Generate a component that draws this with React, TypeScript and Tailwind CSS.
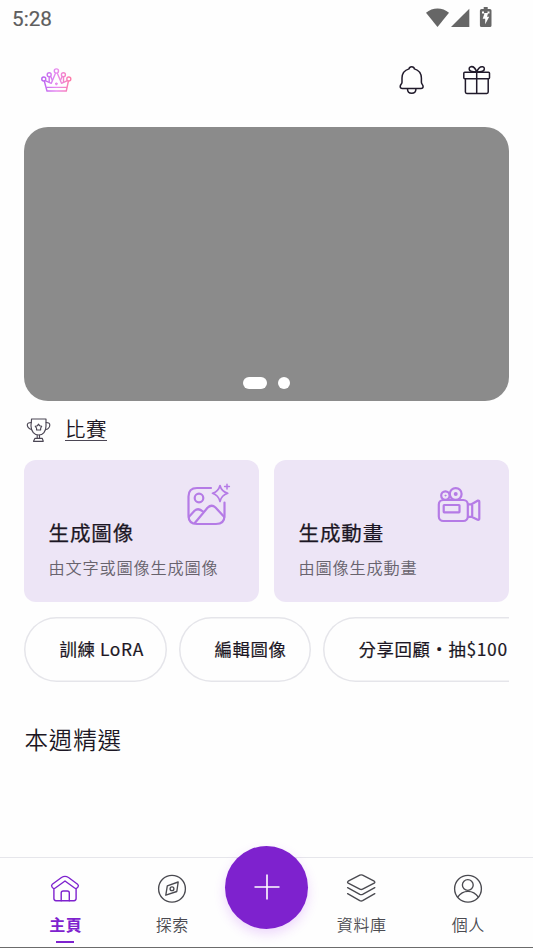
import type { ReactNode } from 'react';
import clsx from 'clsx';

interface IconProps {
  className?: string;
}

interface FeatureCardProps {
  title: string;
  description: string;
  icon: ReactNode;
}

interface TabProps {
  label: string;
  icon: ReactNode;
  active?: boolean;
}

const shortcuts = [
  { label: '訓練 LoRA', width: 'w-[143px]' },
  { label: '編輯圖像', width: 'w-[132px]' },
  { label: '分享回顧・抽$100', width: 'w-[220px]' }
];

function StatusIcons() {
  return (
    <svg viewBox="424 4 72 28" className="h-7 w-[72px]" fill="#666666">
      <path d="M426 12.8C432.5 6.9 442.5 6.9 449 12.8L437.5 26.9Z" />
      <path d="M469.3 8.8V27H451Z" />
      <path
        fillRule="evenodd"
        d="M483.7 7h4v2h2.2q1.6 0 1.6 1.6v14.9q0 1.6-1.6 1.6h-8.400q-1.600 0-1.600-1.600V10.600q0-1.600 1.600-1.600h2.200zM482 11.500V13.500H484.500L482.700 18.800H485.200V24.200L489.200 16.800H487L488 13.500H489.500V11.500H487.500V13H484V11.500z"
      />
    </svg>
  );
}

function CrownIcon({ className }: IconProps) {
  return (
    <svg viewBox="40 66 32 28" className={className} fill="none" stroke="url(#crown)" strokeWidth="1.4" strokeLinejoin="round">
      <defs>
        <linearGradient id="crown" gradientUnits="userSpaceOnUse" x1="41" y1="80" x2="72" y2="80">
          <stop offset="0" stopColor="#b45cf0" />
          <stop offset="0.5" stopColor="#e88cf0" />
          <stop offset="1" stopColor="#ff7aa2" />
        </linearGradient>
      </defs>
      <circle cx="43.800" cy="79" r="2" />
      <circle cx="49.200" cy="74.700" r="2" />
      <circle cx="56.400" cy="71" r="2.100" />
      <circle cx="63.400" cy="74.700" r="2" />
      <circle cx="68.800" cy="79" r="2" />
      <path d="M44.300 81L47 91h19.300L68.400 81M46.800 87.400h19.600" />
      <path d="M45.200 80.600L51.300 83.300L55.600 73M57.200 73L61.500 83.300L67.400 80.600" />
      <path d="M49.200 76.700V82.200M50.600 76.200L52.400 80.400M63.500 76.700V82.200M62.200 76.200L60.400 80.400" />
      <path d="M56.400 82.400v2.800M55 83.800h2.800" />
    </svg>
  );
}

function BellIcon({ className }: IconProps) {
  return (
    <svg viewBox="398 64 28 32" className={className} fill="none" stroke="#201a2b" strokeWidth="1.5" strokeLinecap="round" strokeLinejoin="round">
      <path d="M409 68.900C409.500 65.900 413.900 65.900 414.400 68.900C418.900 70.200 421.300 73.600 421.400 78V82.300C421.400 84.200 423.100 84.500 423.100 86.500C423.100 87.900 422.300 88.500 421 88.500H402.400C401 88.500 400.200 87.900 400.200 86.500C400.200 84.500 402 84.200 402 82.300V78C402.100 73.600 404.500 70.200 409 68.900Z" />
      <path d="M407.500 89C407.500 94.800 415.900 94.800 415.900 89" />
    </svg>
  );
}

function GiftIcon({ className }: IconProps) {
  return (
    <svg viewBox="462 64 30 32" className={className} fill="none" stroke="#201a2b" strokeWidth="1.500" strokeLinecap="round" strokeLinejoin="round">
      <rect x="463.800" y="72.300" width="25.700" height="6.500" rx="1" />
      <path d="M465.400 79V92Q465.400 93.400 466.800 93.400H486.800Q488.200 93.400 488.200 92V79M476.700 72V93" />
      <path d="M476.700 72C475.500 68.500 473 66.300 470.800 66.700C468.500 67.200 468.600 70.500 471 71.300C472.800 71.900 475 72 476.700 72C478 68.500 480.500 66.300 482.800 66.700C485 67.200 484.900 70.500 482.500 71.300C480.700 71.900 478.500 72 476.700 72Z" />
    </svg>
  );
}

function TrophyIcon({ className }: IconProps) {
  return (
    <svg viewBox="24 416 28 28" className={className} fill="none" stroke="#4b4654" strokeWidth="1.150" strokeLinejoin="round" strokeLinecap="round">
      <path d="M31.500 419H46V426C46 431.500 43 435 38.700 435C34.500 435 31 431.500 31 426C31 423 31.600 421.500 31.500 419Z" />
      <path d="M31.300 422.500C29 422.500 27.300 423.300 27.300 425C27.300 426.500 28.700 429 31.300 429.500M46.200 422.500C48.300 422.500 49.800 423.300 49.800 425C49.800 426.500 48.500 429 46 429.500" />
      <path d="M37.200 435.200V438.300M39.500 435.200V438.300M35 438.300H42.200L43.300 441.300H33.500Z" />
      <path d="M38.500 424.200L39.700 425.800L41.700 426.300L40.700 428L40.600 430H36.600L36.500 428L35.300 426.300L37.400 425.800Z" />
    </svg>
  );
}

function ImageSparkleIcon() {
  return (
    <svg viewBox="186 482 46 44" className="h-11 w-[46px]" fill="none" stroke="#b57be6" strokeWidth="2.200" strokeLinecap="round" strokeLinejoin="round">
      <path d="M211 488H197Q188.500 488 188.500 496.500V515.500Q188.500 524 197 524H216Q224.500 524 224.500 515.500V502.500" />
      <circle cx="199" cy="498" r="4.300" />
      <path d="M188.800 517L194.500 510.800Q198.200 507.500 202.500 511.300L203.300 512M194.800 523L207.500 507.800Q211.500 503.800 215.500 507.500L224.300 517" />
      <path strokeWidth="1.700" d="M220 485.500Q221.500 491.500 227.800 493.300Q221.500 495.200 220 501.500Q218.400 495.200 212.500 493.300Q218.400 491.500 220 485.500Z" />
      <path strokeWidth="1.500" d="M227 484.200V489M224.600 486.600H229.400" />
    </svg>
  );
}

function VideoCameraIcon() {
  return (
    <svg viewBox="436 482 46 44" className="h-11 w-[46px]" fill="none" stroke="#b57be6" strokeWidth="2.200" strokeLinecap="round" strokeLinejoin="round">
      <rect x="438.800" y="500" width="29" height="21" rx="4.500" />
      <rect x="443.700" y="505" width="15.800" height="7.300" rx="0.500" />
      <circle cx="455.700" cy="494" r="5.900" />
      <circle cx="445.400" cy="495.600" r="4.200" />
      <circle cx="455.700" cy="494" r="0.900" fill="#b57be6" />
      <circle cx="445.400" cy="495.600" r="0.500" fill="#b57be6" strokeWidth="1" />
      <path d="M468 504.300H471.500L478 500.500Q479.300 500.300 479.300 502V518.500Q479.300 520.300 477.700 519.800L471.500 516.800H468M472.200 504.300V516.800" />
    </svg>
  );
}

function HomeIcon() {
  return (
    <svg viewBox="50 874 30 30" className="size-[30px]" fill="none" stroke="#7e22ce" strokeWidth="1.400" strokeLinejoin="round" strokeLinecap="round">
      <path d="M52.300 884.200L61.500 877.500Q65 875.300 68.500 877.500L77.600 884.200Q79 885.300 78 887Q76.700 889.200 74.600 888L65 881L55.300 888Q53.200 889.200 52 887Q51 885.300 52.300 884.200Z" />
      <path d="M53.900 888.700V898.600Q53.900 900.700 56 900.700H74Q76.100 900.700 76.100 898.600V888.700" />
      <path d="M61.200 900.700V893Q61.200 891 63.200 891H67.300Q69.300 891 69.300 893V900.700" />
    </svg>
  );
}

function CompassIcon() {
  return (
    <svg viewBox="157 874 30 30" className="size-[30px]" fill="none" stroke="#4a4a50" strokeWidth="1.350" strokeLinejoin="round">
      <circle cx="172" cy="888.700" r="13.400" />
      <path d="M178.200 882L176.800 891.500L165.800 895.200L167.300 885.800Z" />
      <circle cx="172" cy="888.800" r="1.900" />
    </svg>
  );
}

function LayersIcon() {
  return (
    <svg viewBox="346 874 30 30" className="size-[30px]" fill="none" stroke="#4a4a50" strokeWidth="1.350" strokeLinejoin="round" strokeLinecap="round">
      <path d="M359.800 875.200Q361.200 874.500 362.600 875.200L374.200 881.200Q375.500 882.200 374.200 883.200L362.600 889.200Q361.200 889.900 359.800 889.200L348.200 883.200Q346.900 882.200 348.200 881.200Z" />
      <path d="M347.600 887.600L359.800 894.300Q361.200 895 362.600 894.300L374.800 887.600M347.600 893.700L359.800 900.700Q361.200 901.400 362.600 900.700L374.800 893.700" />
    </svg>
  );
}

function ProfileIcon() {
  return (
    <svg viewBox="453 874 30 30" className="size-[30px]" fill="none" stroke="#4a4a50" strokeWidth="1.350">
      <circle cx="468" cy="888.700" r="13.400" />
      <circle cx="467.800" cy="885" r="5.400" />
      <path d="M457.500 897.300C463 889.300 473 889.300 478.500 897.300" />
    </svg>
  );
}

function FeatureCard({ title, description, icon }: FeatureCardProps) {
  return (
    <button className="relative flex h-[142px] flex-1 flex-col items-start rounded-xl bg-[#ede5f6] pl-[24.500px] pt-[57px] text-left">
      <span className="absolute right-[27px] top-[22px]">{icon}</span>
      <span className="text-[20.500px] font-normal leading-[30px] tracking-[0.900px] text-[#1c1724] [-webkit-text-stroke:0.250px_#1c1724]">{title}</span>
      <span className="mt-2 text-[16.200px] font-[350] leading-6 tracking-[0.800px] text-[#68636d]">{description}</span>
    </button>
  );
}

function Tab({ label, icon, active }: TabProps) {
  return (
    <button className={clsx('flex flex-1 flex-col items-center pt-4', active ? 'text-[#7e22ce]' : 'text-[#4a4a50]')}>
      {icon}
      <span className={clsx('mt-2 pl-px text-[16px] leading-6 tracking-[0.600px]', active ? 'font-bold' : 'font-[350]')}>{label}</span>
      {active && <span className="mt-[5px] h-[1.500px] w-[18px] bg-[#7e22ce]" />}
    </button>
  );
}

export default function App() {
  return (
    <div className="flex h-[948px] w-[533px] flex-col overflow-hidden bg-[#fefefe] font-['Noto_Sans_CJK_TC',sans-serif] text-[#1c1724]">
      <div className="flex h-9 items-start justify-between pl-3 pr-[37px] pt-1">
        <span className="pt-px font-['Roboto',sans-serif] text-[20.700px] leading-7 text-[#5e5e5e] [-webkit-text-stroke:0.200px_#5e5e5e]">5:28</span>
        <StatusIcons />
      </div>

      <header className="flex h-[91px] items-center justify-between pl-10 pr-[41px]">
        <CrownIcon className="mb-[3px] h-7 w-8" />
        <div className="mb-[3px] flex gap-9">
          <BellIcon className="h-8 w-7" />
          <GiftIcon className="h-8 w-[30px]" />
        </div>
      </header>

      <main className="flex flex-1 flex-col px-6">
        <section className="flex h-[274px] items-end justify-center gap-[11px] rounded-3xl bg-[#8b8b8b] pb-3">
          <span className="h-3 w-6 rounded-full bg-white" />
          <span className="size-3 rounded-full bg-white" />
        </section>

        <a className="mt-[13px] flex h-8 items-center">
          <TrophyIcon className="size-7" />
          <span className="-mt-[3px] ml-[13px] border-b border-[#4b4654] text-[20.500px] font-[350] leading-6 tracking-[0.400px]">比賽</span>
        </a>

        <div className="mt-[14px] flex gap-[15px]">
          <FeatureCard title="生成圖像" description="由文字或圖像生成圖像" icon={<ImageSparkleIcon />} />
          <FeatureCard title="生成動畫" description="由圖像生成動畫" icon={<VideoCameraIcon />} />
        </div>

        <div className="mt-[15px] flex gap-3 overflow-hidden">
          {shortcuts.map((item) => (
            <button
              key={item.label}
              className={clsx(
                'h-[65px] shrink-0 whitespace-nowrap rounded-full pl-[35.500px] text-left text-[17.400px] font-normal tracking-[0.620px] shadow-[inset_0_0_0_1.500px_#e5e5ea] [-webkit-text-stroke:0.200px_#1c1724]',
                item.width
              )}
            >
              {item.label}
            </button>
          ))}
        </div>

        <h2 className="mt-[39px] pl-[0.500px] text-[23.500px] font-[350] leading-9 tracking-[0.850px]">本週精選</h2>
      </main>

      <nav className="relative flex h-[91px] border-b border-b-[#6b6b6b] border-t-[1.500px] border-t-[#e6e6eb] px-3">
        <Tab label="主頁" icon={<HomeIcon />} active />
        <Tab label="探索" icon={<CompassIcon />} />
        <div className="w-[83px]">
          <button className="absolute -top-3 flex size-[83px] items-center justify-center rounded-full bg-[#7e22ce] shadow-[0_5px_12px_rgba(168,60,240,0.200)]">
            <svg viewBox="0 0 26 26" className="-mt-px size-[26px]" stroke="white" strokeWidth="1.600">
              <path d="M13 0.500V25.500M0.500 13H25.500" />
            </svg>
          </button>
        </div>
        <Tab label="資料庫" icon={<LayersIcon />} />
        <Tab label="個人" icon={<ProfileIcon />} />
      </nav>
    </div>
  );
}
